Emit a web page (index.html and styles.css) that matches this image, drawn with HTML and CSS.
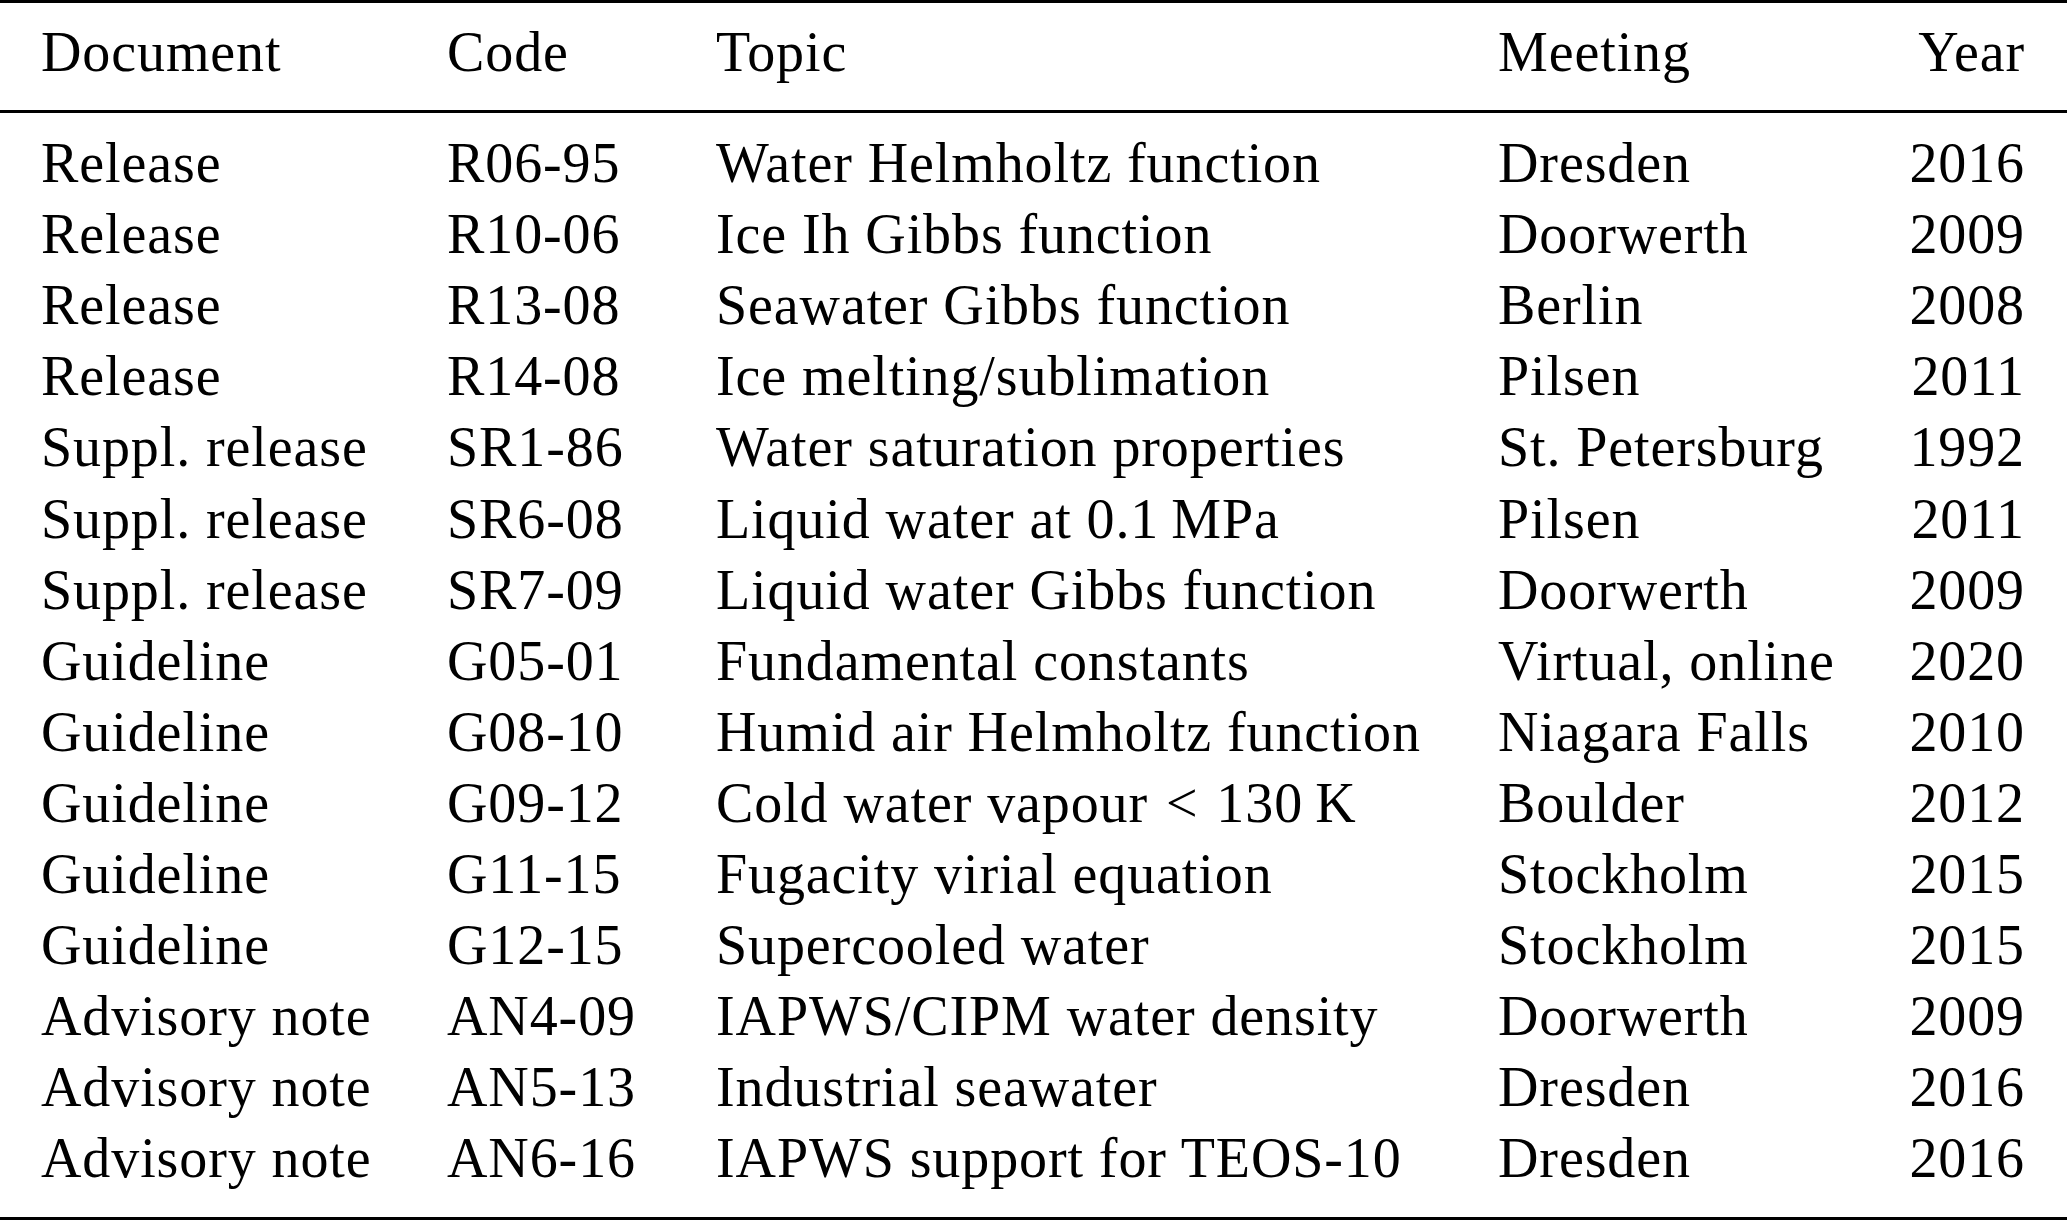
FILE: index.html
```html
<!DOCTYPE html>
<html lang="en">
<head>
<meta charset="utf-8">
<title>IAPWS documents</title>
<link rel="stylesheet" href="styles.css">
</head>
<body>
<table class="doc-table">
  <colgroup>
    <col class="c-doc">
    <col class="c-code">
    <col class="c-topic">
    <col class="c-meet">
    <col class="c-year">
  </colgroup>
  <thead>
    <tr>
      <th class="first">Document</th>
      <th>Code</th>
      <th>Topic</th>
      <th>Meeting</th>
      <th class="year">Year</th>
    </tr>
  </thead>
  <tbody>
    <tr class="row-first"><td class="first">Release</td><td>R06-95</td><td>Water Helmholtz function</td><td>Dresden</td><td class="year">2016</td></tr>
    <tr><td class="first">Release</td><td>R10-06</td><td>Ice Ih Gibbs function</td><td>Doorwerth</td><td class="year">2009</td></tr>
    <tr><td class="first">Release</td><td>R13-08</td><td>Seawater Gibbs function</td><td>Berlin</td><td class="year">2008</td></tr>
    <tr><td class="first">Release</td><td>R14-08</td><td>Ice melting/sublimation</td><td>Pilsen</td><td class="year">2011</td></tr>
    <tr><td class="first">Suppl. release</td><td>SR1-86</td><td>Water saturation properties</td><td>St. Petersburg</td><td class="year">1992</td></tr>
    <tr><td class="first">Suppl. release</td><td>SR6-08</td><td>Liquid water at 0.1&thinsp;MPa</td><td>Pilsen</td><td class="year">2011</td></tr>
    <tr><td class="first">Suppl. release</td><td>SR7-09</td><td>Liquid water Gibbs function</td><td>Doorwerth</td><td class="year">2009</td></tr>
    <tr><td class="first">Guideline</td><td>G05-01</td><td>Fundamental constants</td><td>Virtual, online</td><td class="year">2020</td></tr>
    <tr><td class="first">Guideline</td><td>G08-10</td><td>Humid air Helmholtz function</td><td>Niagara Falls</td><td class="year">2010</td></tr>
    <tr><td class="first">Guideline</td><td>G09-12</td><td>Cold water vapour <span class="rel">&lt;</span> 130&thinsp;K</td><td>Boulder</td><td class="year">2012</td></tr>
    <tr><td class="first">Guideline</td><td>G11-15</td><td>Fugacity virial equation</td><td>Stockholm</td><td class="year">2015</td></tr>
    <tr><td class="first">Guideline</td><td>G12-15</td><td>Supercooled water</td><td>Stockholm</td><td class="year">2015</td></tr>
    <tr><td class="first">Advisory note</td><td>AN4-09</td><td>IAPWS/CIPM water density</td><td>Doorwerth</td><td class="year">2009</td></tr>
    <tr><td class="first">Advisory note</td><td>AN5-13</td><td>Industrial seawater</td><td>Dresden</td><td class="year">2016</td></tr>
    <tr class="row-last"><td class="first">Advisory note</td><td>AN6-16</td><td>IAPWS support for TEOS-10</td><td>Dresden</td><td class="year">2016</td></tr>
  </tbody>
</table>
</body>
</html>
```

FILE: styles.css
```css
html, body {
  margin: 0;
  padding: 0;
  background: #ffffff;
}

.doc-table {
  width: 2067px;
  table-layout: fixed;
  border-collapse: separate;
  border-spacing: 0;
  border-top: 3px solid #000;
  border-bottom: 3px solid #000;
  font-family: "Liberation Serif", "Times New Roman", serif;
  font-size: 56px;
  letter-spacing: 0.9px;
  line-height: 71.1px;
  color: #000;
}

.c-doc { width: 447px; }
.c-code { width: 269px; }
.c-topic { width: 782px; }
.c-meet { width: 402px; }
.c-year { width: 167px; }

.doc-table th,
.doc-table td {
  padding: 0;
  text-align: left;
  font-weight: normal;
  white-space: nowrap;
  vertical-align: top;
}

.doc-table th {
  padding-top: 14px;
  padding-bottom: 22px;
  border-bottom: 3px solid #000;
}

.doc-table .first {
  padding-left: 41px;
}

.doc-table .year {
  text-align: right;
  padding-right: 42px;
}

.doc-table .row-first td {
  padding-top: 15px;
}

.doc-table .row-last td {
  padding-bottom: 22px;
}

.rel {
  padding: 0 3px;
}
```
